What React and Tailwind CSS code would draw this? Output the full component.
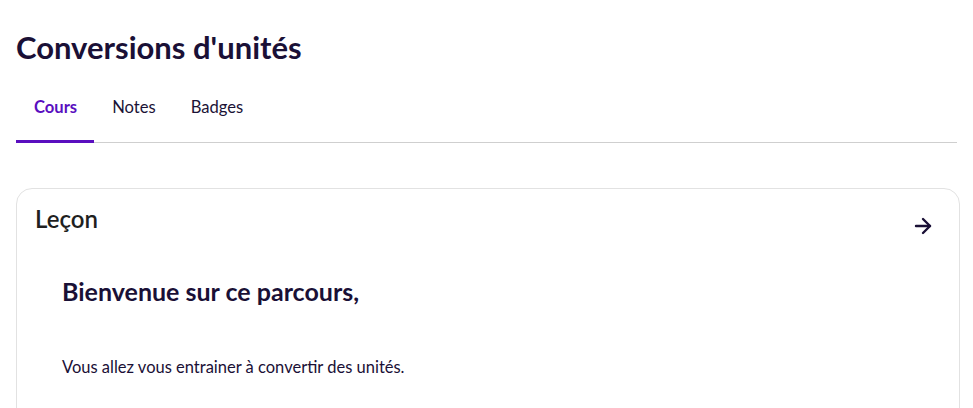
import { ArrowRight } from "lucide-react";

export default function App() {
  const tabs = ["Cours", "Notes", "Badges"];
  return (
    <div className="min-h-screen bg-white px-4 font-['Lato','Noto_Sans',sans-serif] text-[#1b1236]">
      <h1 className="pt-[27px] text-[31px] font-bold leading-[40px] text-[#1a1036]">
        Conversions d'unités
      </h1>
      <nav className="mt-[18px] flex border-b border-[#cfcfcf]">
        {tabs.map((t, i) => (
          <div
            key={t}
            className={
              i === 0
                ? "-mb-px border-b-[3px] border-[#5a0fbf] pl-[18px] pr-[17px] pb-[20px] pt-[10px] text-[16.6px] font-bold text-[#5a0fbf]"
                : "pl-[18px] pr-[17px] pb-[20px] pt-[10px] text-[16.6px] text-[#1b1236]"
            }
          >
            {t}
          </div>
        ))}
      </nav>
      <section className="mt-[45px] mr-[-3px] rounded-2xl border border-[#e2e2e2] px-[18px] pb-16 pt-[14px]">
        <div className="flex items-start justify-between">
          <h2 className="text-[24px] font-semibold leading-[32px] text-[#1f1f1f]">Leçon</h2>
          <ArrowRight className="mr-[6px] mt-[11px] h-6 w-6 text-[#1a1036]" strokeWidth={2.4} />
        </div>
        <div className="px-[27px] pt-[38px]">
          <h3 className="text-[25px] font-bold leading-[30px] text-[#1a1036]">
            Bienvenue sur ce parcours,
          </h3>
          <p className="mt-[49px] text-[16.5px] leading-6 text-[#1a1036]">
            Vous allez vous entrainer à convertir des unités.
          </p>
        </div>
      </section>
    </div>
  );
}
